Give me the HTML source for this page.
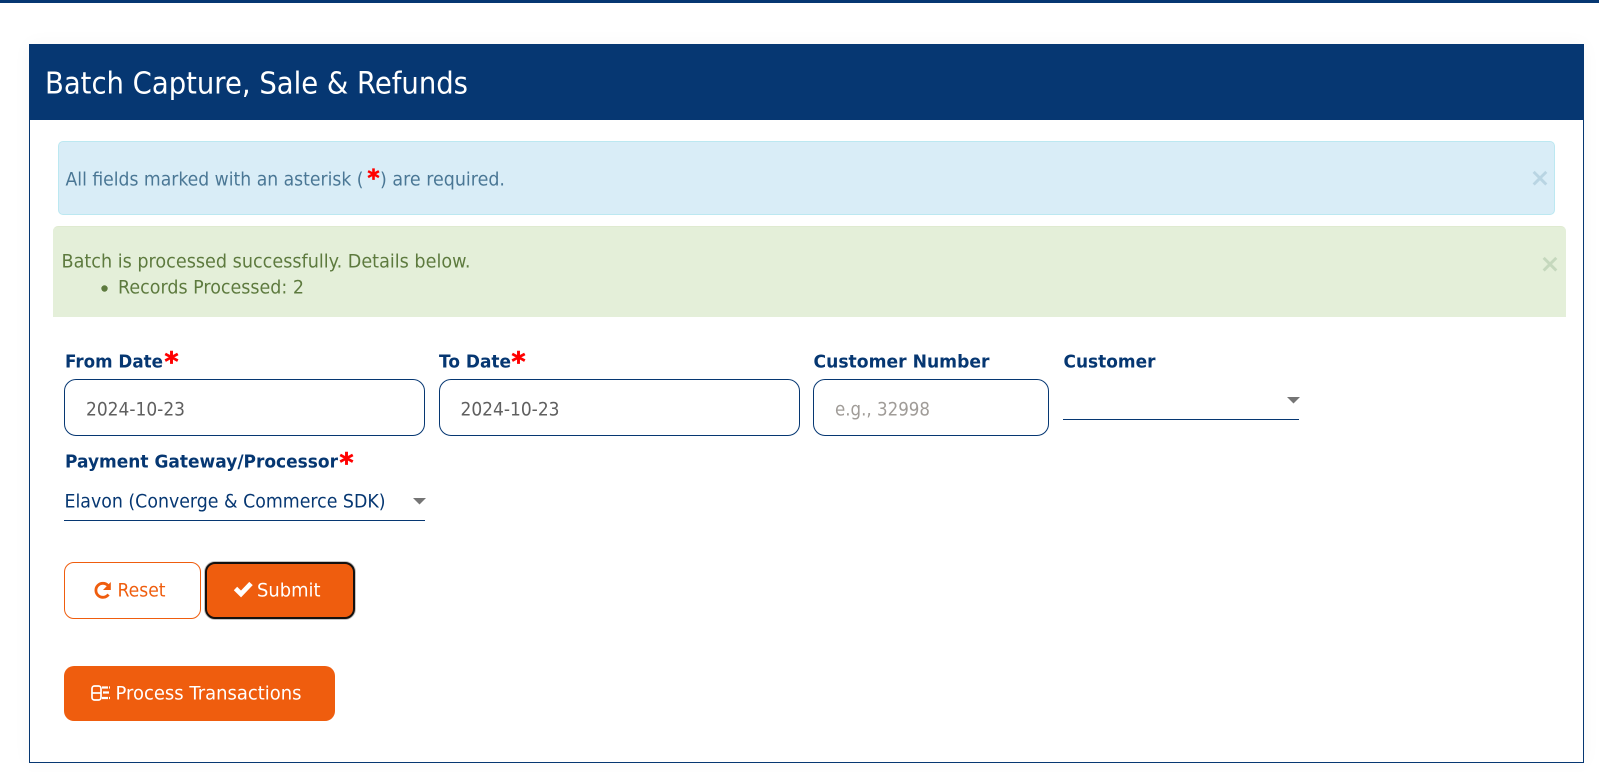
<!DOCTYPE html>
<html lang="en">
<head>
<meta charset="utf-8">
<title>Batch Capture, Sale &amp; Refunds</title>
<style>
html,body{margin:0;padding:0;width:1599px;height:772px;overflow:hidden;background:#fff}
.box{position:absolute;box-sizing:border-box}
#top{left:0;top:0;width:1599px;height:3px;background:#063772}
#panel{left:29px;top:44px;width:1555px;height:719px;border:1px solid #063772;background:#fff;box-shadow:0 0 18px rgba(0,0,0,.035)}
#head{left:29px;top:44px;width:1555px;height:76px;background:#063772}
#info{left:58px;top:141px;width:1497px;height:74px;background:#d9edf7;border:1px solid #bce8f1;border-radius:5px}
#ok{left:53px;top:226px;width:1513px;height:91px;background:#e4efd9;border-top:1px solid #dfead0;border-radius:5px 5px 0 0}
.in{height:57px;border:1px solid #063772;border-radius:12px;background:#fff;top:379px}
.sel{height:1px;background:#063772}
#reset{left:64px;top:562px;width:137px;height:57px;border:1px solid #ef5d0e;border-radius:10px;background:#fff}
#submit{left:205px;top:562px;width:150px;height:57px;border:2px solid #14110f;border-radius:10px;background:#ef5d0e;box-shadow:0 0 0 1px rgba(20,20,20,.25)}
#proc{left:64px;top:666px;width:271px;height:55px;border-radius:10px;background:#ef5d0e}
svg{position:absolute;left:0;top:0}
text{font-family:"DejaVu Sans","Liberation Sans",sans-serif;white-space:pre}
.lb{font-weight:700;font-size:18px;fill:#063772}
.st{font-weight:700;font-size:27px;fill:#f00;stroke:#f00;stroke-width:.7px}
.v{font-size:19px;fill:#5f5f5f}
.a1{font-size:19px;fill:#4a7795}
.a2{font-size:19px;fill:#5d7a3e}
.b{font-size:19px;fill:#fff}
.x{font-size:25px;font-weight:700;text-anchor:middle}
</style>
</head>
<body>
<div class="box" id="top"></div>
<div class="box" id="panel"></div>
<div class="box" id="head"></div>
<div class="box" id="info"></div>
<div class="box" id="ok"></div>
<div class="box in" style="left:64px;width:361px"></div>
<div class="box in" style="left:439px;width:361px"></div>
<div class="box in" style="left:813px;width:236px"></div>
<div class="box sel" style="left:1063px;top:419px;width:236px"></div>
<div class="box sel" style="left:64px;top:520px;width:361px"></div>
<div class="box" id="reset"></div>
<div class="box" id="submit"></div>
<div class="box" id="proc"></div>
<svg width="1599" height="772" viewBox="0 0 1599 772">
<text x="45" y="93.500" font-size="30" fill="#fff" textLength="423" lengthAdjust="spacingAndGlyphs">Batch Capture, Sale &amp; Refunds</text>

<text class="a1" x="65.500" y="185.500" textLength="298" lengthAdjust="spacingAndGlyphs">All fields marked with an asterisk (</text>
<text class="st" style="font-size:23px" x="367.500" y="186" textLength="12" lengthAdjust="spacingAndGlyphs">*</text>
<text class="a1" x="380" y="185.500" textLength="125" lengthAdjust="spacingAndGlyphs">) are required.</text>
<text class="x" x="1540" y="186" fill="#b9d5e3">×</text>

<text class="a2" x="61.500" y="267.500" textLength="409" lengthAdjust="spacingAndGlyphs">Batch is processed successfully. Details below.</text>
<circle cx="104.500" cy="288.500" r="3.200" fill="#5d7a3e"/>
<text class="a2" x="118" y="293.500" textLength="186" lengthAdjust="spacingAndGlyphs">Records Processed: 2</text>
<text class="x" x="1550" y="272" fill="#c5d8bd">×</text>

<text class="lb" x="65" y="367.500" textLength="98" lengthAdjust="spacingAndGlyphs">From Date</text>
<text class="st" x="164.500" y="371" textLength="14" lengthAdjust="spacingAndGlyphs">*</text>
<text class="lb" x="439" y="367.500" textLength="72" lengthAdjust="spacingAndGlyphs">To Date</text>
<text class="st" x="511.500" y="371" textLength="14" lengthAdjust="spacingAndGlyphs">*</text>
<text class="lb" x="813.500" y="367.500" textLength="176" lengthAdjust="spacingAndGlyphs">Customer Number</text>
<text class="lb" x="1063.500" y="367.500" textLength="92" lengthAdjust="spacingAndGlyphs">Customer</text>

<text class="v" x="86" y="415.500" textLength="99" lengthAdjust="spacingAndGlyphs">2024-10-23</text>
<text class="v" x="460.500" y="415.500" textLength="99" lengthAdjust="spacingAndGlyphs">2024-10-23</text>
<text class="v" style="fill:#a09c98" x="835" y="415.500" textLength="95" lengthAdjust="spacingAndGlyphs">e.g., 32998</text>
<polygon points="1287,397 1300,397 1293.500,403.500" fill="#757575"/>

<text class="lb" x="65" y="467.500" textLength="273" lengthAdjust="spacingAndGlyphs">Payment Gateway/Processor</text>
<text class="st" x="339.500" y="472" textLength="14" lengthAdjust="spacingAndGlyphs">*</text>
<text class="v" style="fill:#063772" x="64.500" y="507.500" textLength="321" lengthAdjust="spacingAndGlyphs">Elavon (Converge &amp; Commerce SDK)</text>
<polygon points="413,498 426,498 419.500,504.500" fill="#757575"/>

<path d="M108.500 594.500A7 7 0 1 1 108 585.500" fill="none" stroke="#ef5d0e" stroke-width="2.800"/>
<polygon points="110.800,582 110.800,590 103,590" fill="#ef5d0e"/>
<text x="117.500" y="596.500" font-size="19" fill="#ef5d0e" textLength="48" lengthAdjust="spacingAndGlyphs">Reset</text>

<path d="M235.500 588.500L241 594L251 583.500" fill="none" stroke="#fff" stroke-width="4.800"/>
<text class="b" x="257" y="596.500" textLength="63.500" lengthAdjust="spacingAndGlyphs">Submit</text>

<rect x="92" y="686" width="9" height="14" rx="2.500" fill="none" stroke="#fff" stroke-width="1.700"/>
<path d="M92 693H101" stroke="#fff" stroke-width="1.700"/>
<path d="M102 687.500H110M103 692.500H109M102 698H110" stroke="#fff" stroke-width="2.200" stroke-dasharray="6 1"/>
<text class="b" x="115.500" y="699.500" textLength="186" lengthAdjust="spacingAndGlyphs">Process Transactions</text>
</svg>
</body>
</html>
